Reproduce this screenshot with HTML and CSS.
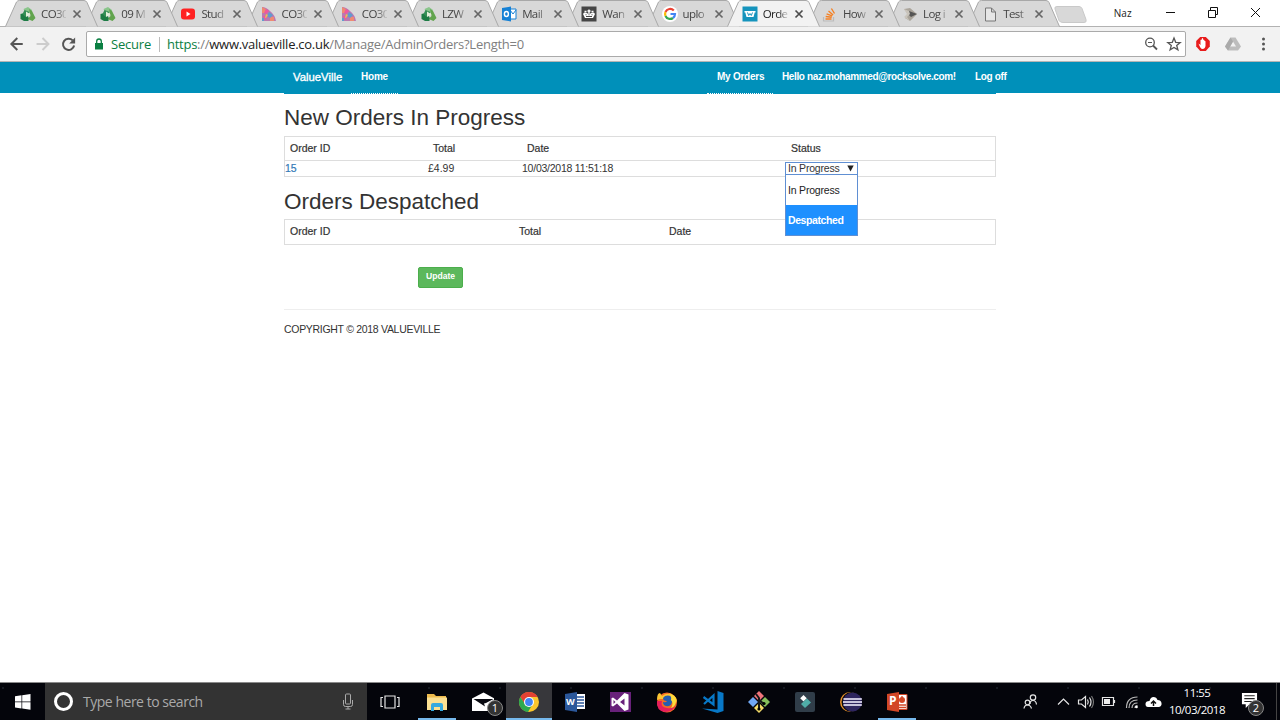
FILE: index.html
```html
<!DOCTYPE html>
<html lang="en">
<head>
<meta charset="utf-8">
<title>Orders - ValueVille</title>
<link rel="stylesheet" href="styles.css">
</head>
<body>
<svg class="defs" aria-hidden="true">
  <symbol id="tab" viewBox="0 0 94 27"><path d="M.5 26.500L11.500 2Q12.500 .5 14.500 .5H79Q81 .5 82 2.500L92.500 26.500"/></symbol>
  <symbol id="close" viewBox="0 0 10 10"><path d="M1.500 1.500l7 7m0-7l-7 7" fill="none" stroke="#666" stroke-width="1.700"/></symbol>
  <symbol id="moodle" viewBox="0 0 16 16"><path d="M3.500 3l4.500-2 4 3-1 3-6-1z" fill="#8ac58b"/><path d="M9 3l3 2 3.500 7-3 3-5-2 3-3z" fill="#62a44e"/><path d="M.5 8l4-1 4 4v4H4L.5 13z" fill="#1d7c45"/><path d="M4.500 4l5 2-4 5-3-3z" fill="#358e57"/><path d="M6 5.500l4.500 3L6 11z" fill="#e3f1d9"/></symbol>
  <symbol id="youtube" viewBox="0 0 16 16"><rect x="1" y="2.500" width="14" height="11" rx="3" fill="#f22"/><path d="M6.500 5.500v5l4-2.500z" fill="#fff"/></symbol>
  <symbol id="mosaic" viewBox="0 0 16 16"><path d="M1 1q4 0 8 4 5 4 6 10H1z" fill="#bb79b0"/><path d="M1 1l4 2-1 4H1zM9 11h4v4H9z" fill="#ee8a72"/><path d="M5 3l3 2-3 3-2-1zM2 10h4l-2 4z" fill="#ef56a0"/><path d="M8 6l4 3-3 3-3-2zM1 12h2v3H1z" fill="#619bce"/><path d="M5 8l2 1-2 3H4z" fill="#ecbc52"/></symbol>
  <symbol id="outlook" viewBox="0 0 16 16"><path d="M8 3h7v10H8z" fill="#fff" stroke="#1681d5"/><path d="M9 4l3 4 3-4" fill="none" stroke="#1681d5"/><path d="M1 2l9-1.500v15L1 14z" fill="#1681d5"/><ellipse cx="5.400" cy="8" rx="2" ry="2.500" fill="none" stroke="#fff" stroke-width="1.400"/></symbol>
  <symbol id="crown" viewBox="0 0 16 16"><path d="M.5.5h15v15H.5z" fill="#454545"/><path d="M4 12L2 8q1.500-2.500 4.500-.5h3q3-2 4.500.5L12 12z" fill="#fff"/><path d="M5 10.500h6M5 8.300v1m6-1v1M8 8.300v1" stroke="#454545"/><path d="M8 3.500v4M6.500 5h3M3.500 5.500h2m5 0h2" stroke="#fff" stroke-width="1.400"/></symbol>
  <symbol id="google" viewBox="0 0 16 16"><circle cx="8" cy="8" r="8" fill="#fff"/><g fill="none" stroke-width="2.200"><path d="M11.800 4.500A5 5 0 0 0 3.500 6" stroke="#ea4335"/><path d="M3.500 6a5 5 0 0 0 0 4" stroke="#fbbc05"/><path d="M3.500 10a5 5 0 0 0 7.500 2" stroke="#34a853"/><path d="M11 12q2-1.500 2-4H8.500" stroke="#4285f4"/></g></symbol>
  <symbol id="basket" viewBox="0 0 16 16"><path d="M.5.5h15v15H.5z" fill="#1594bd"/><path d="M2.500 5h11v1.500h-.8L11.500 11h-7L3.300 6.500h-.8z" fill="#fff"/><path d="M5.500 6.500l1.200 3L8 7.500l1.300 2 1.200-3" fill="none" stroke="#1594bd"/></symbol>
  <symbol id="overflow" viewBox="0 0 16 16"><path d="M1.500 11v4h10v-4" fill="none" stroke="#bbb" stroke-width="1.200"/><path d="M3.500 13h6M3.700 10.500l6 .8M4.600 7.800l5.600 2M6.500 5l4.600 4M9.400 2.500l3.100 5" stroke="#f48024" stroke-width="1.400"/></symbol>
  <symbol id="sketch" viewBox="0 0 16 16"><path d="M2 3l6-1 7 6-7 7-5-3 3-4z" fill="#aaa49a"/><path d="M7 5l8 3-6 3-3-3z" fill="#555"/><path d="M2 3l5 2 1 3-3 3 3 4-6-4 3-3z" fill="#c9c4bb"/></symbol>
  <symbol id="file" viewBox="0 0 16 16"><path d="M3.500 2h6l4 4v9h-10zM9.500 2v4h4" fill="#e6e6e6" stroke="#777"/></symbol>
</svg>

<header class="browser">
  <div class="strip">
    <nav class="tabs">
      <div class="tab" style="z-index:13"><svg class="shape"><use href="#tab"/></svg><svg class="fav"><use href="#moodle"/></svg><span>CO30</span><svg class="x"><use href="#close"/></svg></div>
      <div class="tab" style="z-index:12"><svg class="shape"><use href="#tab"/></svg><svg class="fav"><use href="#moodle"/></svg><span>09 M</span><svg class="x"><use href="#close"/></svg></div>
      <div class="tab" style="z-index:11"><svg class="shape"><use href="#tab"/></svg><svg class="fav"><use href="#youtube"/></svg><span>Stud</span><svg class="x"><use href="#close"/></svg></div>
      <div class="tab" style="z-index:10"><svg class="shape"><use href="#tab"/></svg><svg class="fav"><use href="#mosaic"/></svg><span>CO30</span><svg class="x"><use href="#close"/></svg></div>
      <div class="tab" style="z-index:9"><svg class="shape"><use href="#tab"/></svg><svg class="fav"><use href="#mosaic"/></svg><span>CO30</span><svg class="x"><use href="#close"/></svg></div>
      <div class="tab" style="z-index:8"><svg class="shape"><use href="#tab"/></svg><svg class="fav"><use href="#moodle"/></svg><span>LZW</span><svg class="x"><use href="#close"/></svg></div>
      <div class="tab" style="z-index:7"><svg class="shape"><use href="#tab"/></svg><svg class="fav"><use href="#outlook"/></svg><span>Mail</span><svg class="x"><use href="#close"/></svg></div>
      <div class="tab" style="z-index:6"><svg class="shape"><use href="#tab"/></svg><svg class="fav"><use href="#crown"/></svg><span>Wan</span><svg class="x"><use href="#close"/></svg></div>
      <div class="tab" style="z-index:5"><svg class="shape"><use href="#tab"/></svg><svg class="fav"><use href="#google"/></svg><span>uplo</span><svg class="x"><use href="#close"/></svg></div>
      <div class="tab active" style="z-index:20"><svg class="shape"><use href="#tab"/></svg><svg class="fav"><use href="#basket"/></svg><span>Orde</span><svg class="x"><use href="#close"/></svg></div>
      <div class="tab" style="z-index:3"><svg class="shape"><use href="#tab"/></svg><svg class="fav"><use href="#overflow"/></svg><span>How</span><svg class="x"><use href="#close"/></svg></div>
      <div class="tab" style="z-index:2"><svg class="shape"><use href="#tab"/></svg><svg class="fav"><use href="#sketch"/></svg><span>Log i</span><svg class="x"><use href="#close"/></svg></div>
      <div class="tab last" style="z-index:1"><svg class="shape"><use href="#tab"/></svg><svg class="fav"><use href="#file"/></svg><span>Test</span><svg class="x"><use href="#close"/></svg></div>
    </nav>
    <svg class="newtab" viewBox="0 0 33 17"><path d="M3 .5h22q2 0 3 2l4 11q1 3-2 3H9q-3 0-4-2L1 3Q.2.5 3 .5z" fill="#d8d8d8" stroke="#c9c9c9"/></svg>
    <span class="user">Naz</span>
    <svg class="winctl" viewBox="0 0 100 26" fill="none" stroke="#111"><path d="M7 12.500h9"/><path d="M49.500 10.500h7v7h-7zM51.500 10v-2.500h7v7H57"/><path d="M92 8l9 9m0-9l-9 9"/></svg>
  </div>
  <div class="toolbar">
    <svg class="navbtns" viewBox="0 0 87 34" fill="none" stroke="#555" stroke-width="2"><path d="M23 17H11.500m6-6l-6 6 6 6"/><path d="M37 17h12m-6-6l6 6-6 6" stroke="#ccc"/><path d="M73.500 13.300A5.700 5.700 0 1 0 75 18.500"/><path d="M76 10.500v6h-6z" fill="#555" stroke="none"/></svg>
    <div class="omnibox">
      <svg class="lock" viewBox="0 0 8 12"><path d="M0 5h8v6.500H0z" fill="#0b8043"/><path d="M1.700 5.500V3.300a2.300 2.300 0 0 1 4.600 0v2.200" fill="none" stroke="#0b8043" stroke-width="1.300"/></svg>
      <span class="secure">Secure</span><i class="bar"></i>
      <span class="url"><b>https</b>://<em>www.valueville.co.uk</em>/Manage/AdminOrders?Length=0</span>
      <svg class="omniicons" viewBox="0 0 40 16" fill="none" stroke="#555"><circle cx="6" cy="6.500" r="4.300" stroke-width="1.300"/><path d="M4 6.500h4"/><path d="M9 9.500l4 4" stroke-width="1.800"/><path d="M30 2l1.700 4.300 4.500.2-3.500 2.900 1.200 4.500L30 11.400l-3.900 2.500 1.200-4.500-3.500-2.900 4.500-.2z" stroke-width="1.300"/></svg>
    </div>
    <svg class="exticons" viewBox="0 0 93 34"><path d="M14.200 10h5.600l4 4v5.600l-4 4.400h-5.600l-4-4.400V14z" fill="#e81c1c"/><path d="M12.500 16.500l2 1.500v-5q.8-.8 1.200 0l.2-1.500q.8-.8 1.200 0v1.500q.8-.8 1.200 0v1q.8-.5 1.200.4V19q-.5 3-3 3-2 0-4-5.500z" fill="#fff"/><path d="M44.500 10.500h5l5.500 9-3 4H42l-3-4z" fill="#bdbdbd"/><path d="M47 14.500l3 5h-6z" fill="#f2f2f2"/><path d="M44.500 10.500L39 19.500l3 4 5-9z" fill="#aaa"/><g fill="#555"><circle cx="77.500" cy="12" r="1.500"/><circle cx="77.500" cy="17" r="1.500"/><circle cx="77.500" cy="22" r="1.500"/></g></svg>
  </div>
</header>

<div class="site-nav">
  <nav class="container">
    <a class="brand">ValueVille</a><a class="link dotted home">Home</a>
    <div class="right"><a class="link dotted orders">My Orders</a><a class="link hello">Hello naz.mohammed@rocksolve.com!</a><a class="link logoff">Log off</a></div>
  </nav>
</div>
<main class="content">
  <h2>New Orders In Progress</h2>
  <div class="table first">
    <div class="row head"><span>Order ID</span><span>Total</span><span>Date</span><span class="status">Status</span></div>
    <div class="row data"><span><a>15</a></span><span>£4.99</span><span class="date">10/03/2018 11:51:18</span>
      <div class="select"><div class="value">In Progress<svg viewBox="0 0 7 7"><path d="M.3.500h6.400L3.500 6.500z" fill="#222"/></svg></div>
        <div class="menu"><div>In Progress</div><div class="selected">Despatched</div></div>
      </div>
    </div>
  </div>
  <h2>Orders Despatched</h2>
  <div class="table second"><div class="row head"><span>Order ID</span><span>Total</span><span>Date</span></div></div>
  <button class="update">Update</button>
  <footer>COPYRIGHT © 2018 VALUEVILLE</footer>
</main>

<div class="taskbar">
  <div class="start"><svg width="16" height="16" viewBox="0 0 16 16" fill="#fff"><path d="M0 2.200L6.500 1.300v6.200H0zM7.200 1.200L15.500 0v7.500H7.200zM0 8.200h6.500v6.200L0 13.500zM7.200 8.200h8.300v7.500l-8.300-1.200z"/></svg></div>
  <div class="search"><i class="ring"></i><span>Type here to search</span>
    <svg width="12" height="17" viewBox="0 0 12 17" fill="none" stroke="#aaa"><rect x="3.500" y="1" width="5" height="10" rx="1"/><path d="M1.500 7v4.500q0 2 2 2h5q2 0 2-2V7M6 13.500V16M3.500 16h5"/></svg></div>
  <div class="apps">
    <div><svg viewBox="0 0 22 22" fill="none" stroke="#e5e5e5" stroke-width="1.200"><path d="M5 5h10v12H5zM3 6.500H1v9h2M17 6.500h2v9h-2"/></svg></div>
    <div class="open"><svg viewBox="0 0 22 22"><path d="M1 3h7l2 2h10v14H1z" fill="#eebb4d"/><path d="M1 6.500h20V19H1z" fill="#fbe092"/><path d="M5 20v-6q0-2 2-2h8q2 0 2 2v6h-3v-4H8v4z" fill="#35a9df"/></svg></div>
    <div><svg viewBox="0 0 22 22"><path d="M0 7.500L11.500 1.500l11 6V20H0z" fill="#fff"/><path d="M1.500 8h20L14 12l-2 .5 1 3z" fill="#080910"/></svg><b class="badge">1</b></div>
    <div class="open current"><svg viewBox="0 0 22 22"><circle cx="11" cy="11" r="10" fill="#fbc62d"/><path d="M2.300 6A10 10 0 0 1 19.700 6H11L7 13.500z" fill="#e34133"/><path d="M2.300 6A10 10 0 0 0 10 21l4.500-7.500-7 .2z" fill="#2da94f"/><circle cx="11" cy="11" r="5" fill="#fff"/><circle cx="11" cy="11" r="3.900" fill="#4285f4"/></svg></div>
    <div><svg viewBox="0 0 22 22"><path d="M11 3h10v15H11z" fill="#fff"/><path d="M13 6h7M13 9h7M13 12h7M13 15h7" stroke="#2b579a" stroke-width="1.300"/><path d="M1 3l12-2v20L1 19z" fill="#2b579a"/></svg><b class="letter w">W</b></div>
    <div><svg viewBox="0 0 22 22"><path d="M0 1h21v20H0z" fill="#68217a"/><path d="M14.500 2l4 1.500v15l-4 1.500L7 12.500l-4 3-1.500-.8V7.300L3 6.500l4 3zM14.500 7.500L10 11l4.500 3.500zM3.500 9v4l2-2z" fill="#fff" fill-rule="evenodd"/></svg></div>
    <div><svg viewBox="0 0 22 22"><circle cx="11" cy="11.500" r="10" fill="#f46b24"/><path d="M1 9Q1 2 4 2l2 3q5-4 11-1 4 2 4 7l-5-3H4z" fill="#fbc533"/><path d="M1 10q-1 10 8 11 8 0 11-7-3 4-9 3-7-1-5-7z" fill="#e71e5b"/><path d="M9 5q7-2 7 5 0 6-6 5-3-1-3-4 3 1 4-1-4 0-4-3z" fill="#255eaf"/><path d="M13 2q8 3 7 9-1 5-5 6 3-5 0-8 1-4-2-7z" fill="#ffdc3c"/></svg></div>
    <div><svg viewBox="0 0 22 22"><path d="M15.500 0l6 2v18l-6 2L0 17.500l15.500 1z" fill="#0878c7"/><path d="M1.500 6l10 7.500v-9L2 13" fill="none" stroke="#0878c7" stroke-width="2.200"/></svg></div>
    <div><svg viewBox="0 0 22 22"><path d="M11 0l5 5-5 5-5-5z" fill="#f0747b"/><path d="M5 6l5 5-5 5-5-5z" fill="#70a7f3"/><path d="M17 6l5 5-5 5-5-5z" fill="#86bf5b"/><path d="M11 12l5 5-5 5-5-5z" fill="#f4dc68"/><path d="M8 3l3 4v11M11 9l5 4" fill="none" stroke="#15171a" stroke-width="2"/><circle cx="11" cy="18" r="1.600"/><circle cx="16" cy="12.500" r="1.600"/></svg></div>
    <div><svg viewBox="0 0 22 22"><rect x="1" y="1" width="20" height="20" rx="2" fill="#303d49"/><path d="M9.500 4l3.300 3.300-3.300 3.200-3.300-3.200z" fill="#fff"/><path d="M13 7.500l4 4-6 5.500-4-4z" fill="#50ada8"/></svg></div>
    <div><svg viewBox="0 0 22 22"><circle cx="10" cy="11" r="10" fill="#e8912b"/><circle cx="11.500" cy="11" r="10" fill="#080910"/><circle cx="12.500" cy="11" r="9.500" fill="#2e255f"/><path d="M3.500 8h18.300M3 11h19M3.500 14h18.300" stroke="#c7c2dc" stroke-width="2"/></svg></div>
    <div class="open"><svg viewBox="0 0 22 22"><path d="M10 3.500h11v15H10z" fill="#fff" stroke="#d24726"/><circle cx="16" cy="9" r="3" fill="#d24726"/><path d="M16 9V5M13 14h7m-7 2.500h7" stroke="#d24726" stroke-width="1.300"/><path d="M1 3l12-2v20L1 19z" fill="#d24726"/></svg><b class="letter p">P</b></div>
  </div>
  <svg class="tray" viewBox="0 0 146 37" fill="none" stroke="#e5e5e5" stroke-width="1.200"><circle cx="13" cy="14.500" r="2.700"/><path d="M10 21q0-3.500 3-3.500t3.500 4"/><circle cx="7.500" cy="19.500" r="2.300"/><path d="M4 25.500q.5-3.500 3.500-3.500t4 3.500"/><path d="M38 21.500l5.500-5.500 5.500 5.500"/><path d="M58.500 17h3l4-3.500v11l-4-3.500h-3zM67.500 16.500q1.500 2.500 0 5M69.500 14.500q3 4.500 0 9"/><path d="M71.500 13q4 6 0 12" stroke="#777"/><path d="M82.500 14.500h11v8h-11zM94.500 17v3"/><path d="M84 16h6v5h-6z" fill="#eee" stroke="none"/><path d="M106.500 25q0-11 11-11M109 25q0-8 8.500-8M112 25q0-5 5.500-5M115 25q0-2.500 2.500-2.500" stroke="#bbb"/><circle cx="116.500" cy="24" r="1.300" fill="#fff" stroke="none"/><path d="M128 24h11q3-1 2.500-4t-4-3q-1-3-4-3t-4 4q-4 0-4 3t2.500 3z" fill="#fff" stroke="none"/><path d="M133.500 23v-4.500m-2.500 2l2.500-2.500 2.500 2.500" stroke="#111" stroke-width="1.500"/></svg>
  <div class="clock"><span>11:55</span><span>10/03/2018</span></div>
  <div class="action"><svg viewBox="0 0 18 18"><path d="M1 1h16v12H9l-4 4v-4H1z" fill="#fff"/><path d="M3.500 4h11m-11 3h11m-11 3h8" stroke="#222" stroke-width="1.200"/></svg><b class="badge">2</b></div>
</div>
</body>
</html>
```

FILE: styles.css
```css
* { box-sizing: border-box; }
body { margin: 0; height: 720px; display: flex; flex-direction: column; overflow: hidden; background: #fff; color: #333; font-family: "Liberation Sans", Arial, sans-serif; font-size: 10.5px; }
svg { flex: none; display: block; }
.defs { position: absolute; width: 0; height: 0; }

.browser { font-family: "Open Sans", "Noto Sans", sans-serif; }
.strip { height: 27px; display: flex; border-bottom: 1px solid #b2b2b2; }
.tabs { display: flex; padding-left: 5px; }
.tab { position: relative; width: 80.2px; height: 27px; display: flex; align-items: center; padding: 0 0 0 15px; color: #444; font-size: 11.5px; }
.last { width: 81.5px; }
.shape { position: absolute; left: 0; top: 0; width: 94px; height: 27px; fill: #d8d8d8; stroke: #a8a8a8; }
.active .shape { fill: #f2f2f2; }
.active { color: #222; }
.fav { position: relative; width: 16px; height: 16px; margin-right: 5px; }
.tab span { position: relative; width: 25px; margin-right: 6px; white-space: nowrap; letter-spacing: -.6px; -webkit-mask-image: linear-gradient(90deg, #000 60%, rgba(0, 0, 0, .15)); mask-image: linear-gradient(90deg, #000 60%, rgba(0, 0, 0, .15)); }
.x { position: relative; width: 10px; height: 10px; }
.active .x { filter: brightness(.75); }
.newtab { width: 33px; height: 17px; margin: 6px 0 0 5.1px; }
.user { width: 20px; margin: 5px 0 0 27px; font-size: 10px; line-height: 16px; color: #222; }
.winctl { width: 100px; height: 26px; margin-left: 25px; overflow: visible; }
.toolbar { height: 35px; display: flex; align-items: center; background: #f2f2f2; border-bottom: 1px solid #b5b5b5; }
.navbtns { width: 86px; height: 34px; }
.omnibox { width: 1100px; height: 26px; display: flex; align-items: center; padding: 0 1px 0 8px; background: #fff; border: 1px solid #aaa; border-radius: 2px; font-size: 13px; }
.lock { width: 8px; height: 12px; margin-right: 8px; }
.secure { width: 48px; color: #0b8043; letter-spacing: -.2px; }
.bar { width: 1px; height: 15px; background: #bbb; margin-right: 7px; }
.url { flex: 1; color: #808080; letter-spacing: -.26px; white-space: nowrap; }
.url b { font-weight: 400; color: #0b8043; }
.url em { font-style: normal; color: #222; }
.omniicons { width: 40px; height: 16px; }
.exticons { width: 93px; height: 34px; }

.site-nav { height: 31px; background: #0090ba; color: #fff; }
.container { width: 712px; height: 32px; margin: 0 auto; display: flex; background: #0090ba; line-height: 30px; }
.brand { width: 67px; padding-left: 9px; font-size: 11.3px; -webkit-text-stroke: .35px #fff; }
.link { height: 32px; font-size: 10px; letter-spacing: -.32px; font-weight: 700; white-space: nowrap; }
.dotted { border-bottom: 1px dotted #fff; }
.home { width: 47px; padding-left: 10px; letter-spacing: -.2px; }
.right { display: flex; margin-left: auto; margin-right: -11px; }
.orders { width: 66px; padding-left: 10px; letter-spacing: -.25px; }
.hello { width: 193px; padding-left: 9px; letter-spacing: -.37px; }
.logoff { width: 41px; padding-left: 9px; }

.content { flex: 1; width: 712px; margin: 0 auto; padding-top: 12px; min-height: 0; }
h2 { margin: 0; height: 32px; line-height: 26px; font-size: 22.5px; font-weight: 400; color: #333; }
.table { border: 1px solid #ddd; }
.row { display: grid; color: #333; }
.first .row { grid-template-columns: 143px 94px 263px 1fr; }
.second .row { grid-template-columns: 229px 150px 1fr; }
.head { height: 23px; line-height: 23px; -webkit-text-stroke: .2px #333; }
.head > span { padding-left: 5px; }
.head .status { padding-left: 6px; }
.first { height: 41px; margin-top: -1px; }
.second { height: 26px; }
.first + h2 { margin-top: 12px; height: 30px; }
.data { height: 16px; border-top: 1px solid #ddd; line-height: 15px; }
.data a { color: #337ab7; -webkit-text-stroke: .2px #337ab7; }
.date { letter-spacing: -.24px; }
.select { position: relative; width: 73px; height: 14px; margin-top: 1px; line-height: 10px; letter-spacing: -.2px; }
.value { height: 13px; display: flex; align-items: center; gap: 7px; padding: 0 0 1px 2px; border: 1px solid #5f8fd3; background: #fff; white-space: nowrap; }
.value svg { width: 7px; height: 7px; }
.menu { position: absolute; z-index: 2; left: 0; top: 12px; width: 73px; border: 1px solid #5f8fd3; background: #fff; line-height: 31px; color: #222; }
.menu div { height: 30px; padding-left: 2px; }
.menu .selected { background: #1e90ff; color: #fff; font-weight: 700; letter-spacing: -.4px; line-height: 30px; }
.update { display: block; width: 45px; height: 21px; margin: 22px 0 21px 134px; padding: 0 0 4px; background: #5cb85c; border: 1px solid #4cae4c; border-radius: 2px; color: #fff; font: 700 8.6px "Liberation Sans", Arial, sans-serif; }
footer { border-top: 1px solid #eee; padding-top: 12px; line-height: 14px; font-size: 10.5px; letter-spacing: -.3px; }

.taskbar { height: 38px; display: flex; flex: none; border-top: 1px solid #8a8a8a; background: radial-gradient(circle at 3px 5px, #1a2028 .5px, transparent 1.500px) 0 0/71px 37px, #04050b; color: #fff; font-family: "Open Sans", "Noto Sans", sans-serif; }
.start { width: 45px; display: flex; align-items: center; justify-content: center; }
.search { width: 322px; display: flex; align-items: center; padding: 0 13px 0 9px; background: #333; color: #aaa; font-size: 14px; letter-spacing: -.48px; }
.ring { width: 19px; height: 19px; border: 3px solid #fff; border-radius: 50%; margin-right: 10px; }
.search span { flex: 1; }
.apps { display: flex; margin-left: 1px; }
.apps > div { position: relative; width: 46px; display: flex; align-items: center; justify-content: center; }
.apps svg { width: 22px; height: 22px; }
.open::after { content: ""; position: absolute; left: 4px; right: 4px; bottom: 0; height: 2px; background: #76b9ed; }
.current { background: #37373b; }
.current::after { left: 0; right: 0; }
.badge { position: absolute; width: 16px; height: 16px; border: 1px solid #888; border-radius: 50%; background: #333; font-size: 11px; line-height: 14px; text-align: center; font-weight: 400; }
.apps .badge { left: 27px; top: 17px; }
.letter { position: absolute; font-size: 10px; line-height: 12px; }
.w { left: 14px; top: 13px; font-size: 9px; }
.p { left: 15px; top: 12px; font-size: 12px; }
.tray { width: 146px; height: 37px; margin-left: 100px; }
.clock { width: 66px; margin-left: -2px; display: flex; flex-direction: column; align-items: center; padding-top: 1px; font-size: 11.5px; line-height: 17px; letter-spacing: -.5px; }
.action { position: relative; width: 47px; padding: 9px 0 0 11px; border-right: 1px solid #444; }
.action svg { width: 17px; height: 17px; }
.action .badge { left: 18px; top: 17px; }
```
